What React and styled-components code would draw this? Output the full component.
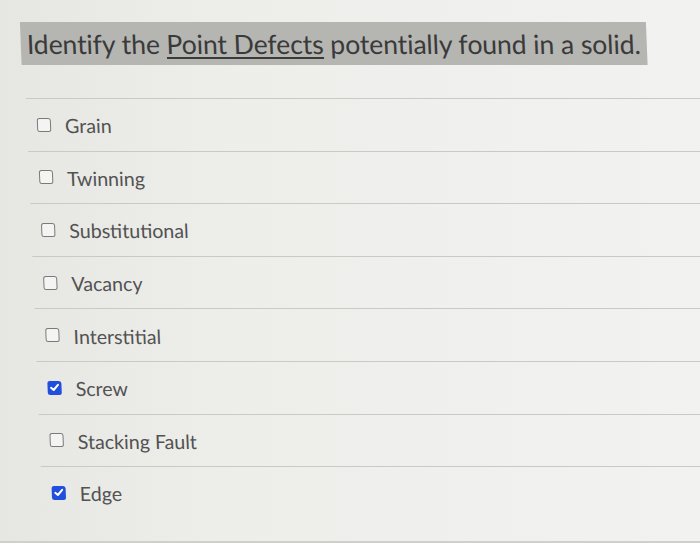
import React from "react";
import styled, { createGlobalStyle } from "styled-components";

const Global = createGlobalStyle`
  html, body { margin: 0; padding: 0; }
  body {
    background: #ecece9;
    font-family: Lato, "Open Sans", sans-serif;
    overflow: hidden;
  }
`;

const Page = styled.div`
  width: 700px;
  height: 543px;
  position: relative;
  overflow: hidden;
  background: linear-gradient(90deg, #e6e6e3 0%, #ededea 30%, #f0f0ee 70%, #f2f2f0 100%);
  border-bottom: 2px solid #cfcfcc;
  box-sizing: border-box;
`;

const Sheet = styled.div`
  padding: 22px 0 0 19px;
  transform-origin: 0 0;
  transform: skewX(2.3deg);
`;

const TitleBar = styled.div`
  width: 626px;
  height: 43px;
  background: #b5b5b2;
  display: flex;
  align-items: center;
  padding-left: 6px;
  box-sizing: border-box;
`;

const Title = styled.h1`
  margin: 0;
  font-family: Lato, sans-serif;
  font-weight: 400;
  font-size: 26.6px;
  color: #3a3a3a;
  white-space: nowrap;
  letter-spacing: -0.1px;
`;

const Term = styled.span`
  text-decoration: underline;
  text-decoration-thickness: 2px;
  text-underline-offset: 3px;
  text-decoration-color: #3a3a3a;
`;

const List = styled.div`
  margin-top: 33px;
  margin-left: 3px;
`;

const Row = styled.label`
  display: flex;
  align-items: center;
  gap: 14px;
  height: 52.6px;
  border-top: 1.5px solid #c9c9c6;
  padding-left: 10px;
  box-sizing: border-box;
`;

const Box = styled.span`
  width: 14px;
  height: 14px;
  box-sizing: border-box;
  border-radius: 2.5px;
  border: ${(p) => (p.$checked ? "none" : "1.7px solid #7a7a7a")};
  background: ${(p) => (p.$checked ? "#1f4fdc" : "#f4f4f2")};
  display: flex;
  align-items: center;
  justify-content: center;
  flex-shrink: 0;
`;

const Label = styled.span`
  font-family: Lato, sans-serif;
  font-size: 19.6px;
  color: #525252;
  position: relative;
  top: 1px;
`;

const options = [
  ["Grain", false],
  ["Twinning", false],
  ["Substitutional", false],
  ["Vacancy", false],
  ["Interstitial", false],
  ["Screw", true],
  ["Stacking Fault", false],
  ["Edge", true],
];

const Check = () => (
  <svg width="10" height="9" viewBox="0 0 10 9">
    <path d="M1.5 4.8 L4 7 L8.5 1.8" fill="none" stroke="#fff" strokeWidth="2" strokeLinecap="round" strokeLinejoin="round" />
  </svg>
);

export default function App() {
  return (
    <>
      <Global />
      <Page>
        <Sheet>
          <TitleBar>
            <Title>
              Identify the <Term>Point Defects</Term> potentially found in a solid.
            </Title>
          </TitleBar>
          <List>
            {options.map(([text, checked]) => (
              <Row key={text}>
                <Box $checked={checked}>{checked && <Check />}</Box>
                <Label>{text}</Label>
              </Row>
            ))}
          </List>
        </Sheet>
      </Page>
    </>
  );
}
